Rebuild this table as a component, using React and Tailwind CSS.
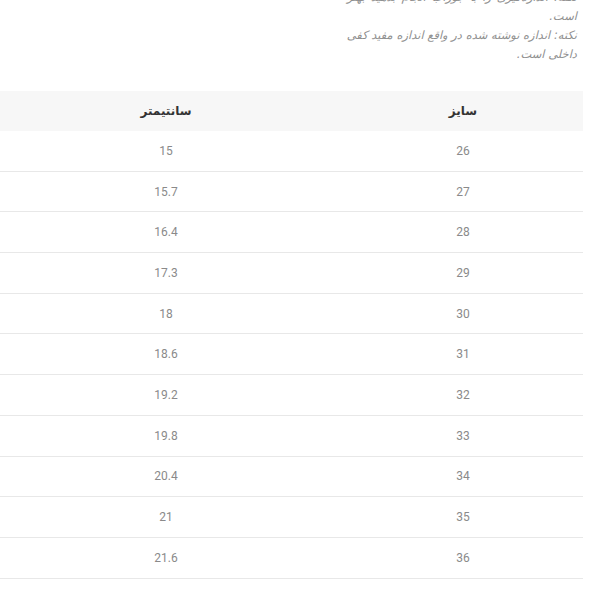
import React from 'react';

const rows = [
  ['26', '15'],
  ['27', '15.7'],
  ['28', '16.4'],
  ['29', '17.3'],
  ['30', '18'],
  ['31', '18.6'],
  ['32', '19.2'],
  ['33', '19.8'],
  ['34', '20.4'],
  ['35', '21'],
  ['36', '21.6'],
];

export default function App() {
  return (
    <div dir="rtl" className="w-[600px] h-[600px] bg-white overflow-hidden font-['DejaVu_Sans',sans-serif]">
      {/* Notes */}
      <div className="mr-[23px] w-[230px] mt-[-12px] text-[11.5px] leading-[19px] italic text-[#909090]">
        <div className="whitespace-nowrap text-justify [text-align-last:justify]">نکته: اندازه‌گیری را با جوراب انجام بدهید بهتر</div>
        <div>است.</div>
        <div className="whitespace-nowrap text-justify [text-align-last:justify]">نکته: اندازه نوشته شده در واقع اندازه مفید کفی</div>
        <div>داخلی است.</div>
      </div>

      {/* Size table */}
      <div className="mr-[17px] w-[594px] mt-[27px]">
        <div className="grid grid-cols-[240px_354px] h-[40px] bg-[#f7f7f7] items-center text-center text-[12px] font-bold text-[#333]">
          <div>سایز</div>
          <div>سانتیمتر</div>
        </div>
        {rows.map(([size, cm]) => (
          <div
            key={size}
            className="grid grid-cols-[240px_354px] h-[40.7px] border-b border-[#e8e8e8] items-center text-center text-[12px] text-[#8a8a8a] font-['Roboto',sans-serif]"
          >
            <div>{size}</div>
            <div>{cm}</div>
          </div>
        ))}
      </div>
    </div>
  );
}
